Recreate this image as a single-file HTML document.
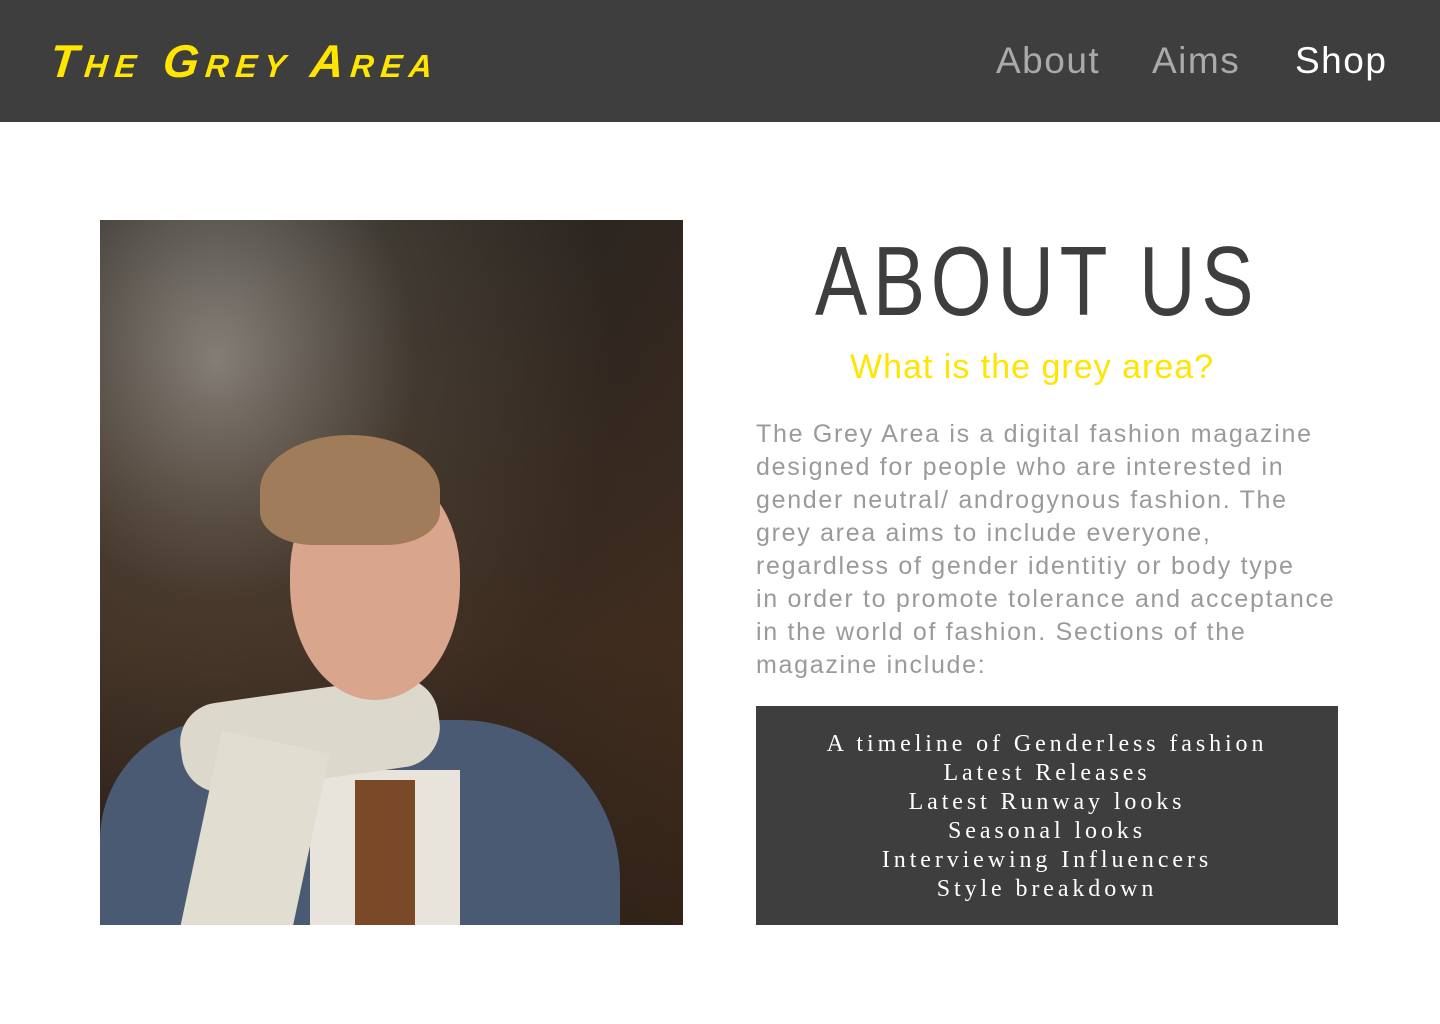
<!DOCTYPE html>
<html><head><style>
*{margin:0;padding:0;box-sizing:border-box}
body{width:1440px;height:1024px;background:#fff;font-family:"Liberation Sans",sans-serif;position:relative;overflow:hidden}
header{position:absolute;left:0;top:0;width:1440px;height:122px;background:#3e3e3e}
.logo{position:absolute;left:50px;top:34px;color:#ffe500;font:italic bold 46px "Liberation Sans",sans-serif;letter-spacing:7px;font-variant:small-caps;transform:skewX(-6deg);white-space:nowrap}
.nav{position:absolute;top:40px;font-size:37px;letter-spacing:1.5px;color:#aaa}
.photo{position:absolute;left:100px;top:220px;width:583px;height:705px;overflow:hidden;background:radial-gradient(ellipse at 20% 20%,#8a8782 0,#3f3a33 30%,#2c2520 60%,#3a2a1e 100%)}
.photo div{position:absolute}
h1{position:absolute;left:815px;top:225px;white-space:nowrap;font-weight:normal;font-size:98px;letter-spacing:7px;color:#3e3e3e;transform:scaleX(0.8);transform-origin:left top}
.sub{position:absolute;left:850px;top:348px;font-size:34px;color:#ffe500;letter-spacing:1px;white-space:nowrap}
.body{position:absolute;left:756px;top:418px;font-size:25px;line-height:33px;color:#9a9a9a;letter-spacing:1.7px;white-space:nowrap}
.box{position:absolute;left:756px;top:706px;width:582px;height:219px;background:#3e3e3e;color:#fff;text-align:center;font:24px/29px "Liberation Serif",serif;letter-spacing:3.9px;padding-top:24px;white-space:nowrap}
</style></head><body>
<header>
<div class="logo">The Grey Area</div>
<div class="nav" style="left:996px;color:#aaa">About</div>
<div class="nav" style="left:1152px;color:#aaa">Aims</div>
<div class="nav" style="left:1295px;color:#fff">Shop</div>
</header>
<div class="photo">
<div style="left:0;top:0;width:583px;height:705px;background:linear-gradient(180deg,rgba(0,0,0,0) 0,rgba(90,55,30,.35) 60%,rgba(40,25,15,.4) 100%)"></div>
<div style="left:0;top:500px;width:520px;height:260px;background:#4a5a72;border-radius:120px 160px 0 0"></div>
<div style="left:210px;top:550px;width:150px;height:200px;background:#e8e4dc"></div>
<div style="left:80px;top:470px;width:260px;height:90px;background:#ddd8cc;border-radius:40px;transform:rotate(-8deg)"></div>
<div style="left:100px;top:520px;width:110px;height:200px;background:#e2ddd1;transform:rotate(12deg)"></div>
<div style="left:255px;top:560px;width:60px;height:160px;background:#7a4a28"></div>
<div style="left:190px;top:250px;width:170px;height:230px;background:#d9a58d;border-radius:45% 45% 50% 50%"></div>
<div style="left:160px;top:215px;width:180px;height:110px;background:#a07c5a;border-radius:50% 50% 30% 30%"></div>
</div>
<h1>ABOUT US</h1>
<div class="sub">What is the grey area?</div>
<div class="body">The Grey Area is a digital fashion magazine<br>designed for people who are interested in<br>gender neutral/ androgynous fashion. The<br>grey area aims to include everyone,<br>regardless of gender identitiy or body type<br>in order to promote tolerance and acceptance<br>in the world of fashion. Sections of the<br>magazine include:</div>
<div class="box">A timeline of Genderless fashion<br>Latest Releases<br>Latest Runway looks<br>Seasonal looks<br>Interviewing Influencers<br>Style breakdown</div>
</body></html>
